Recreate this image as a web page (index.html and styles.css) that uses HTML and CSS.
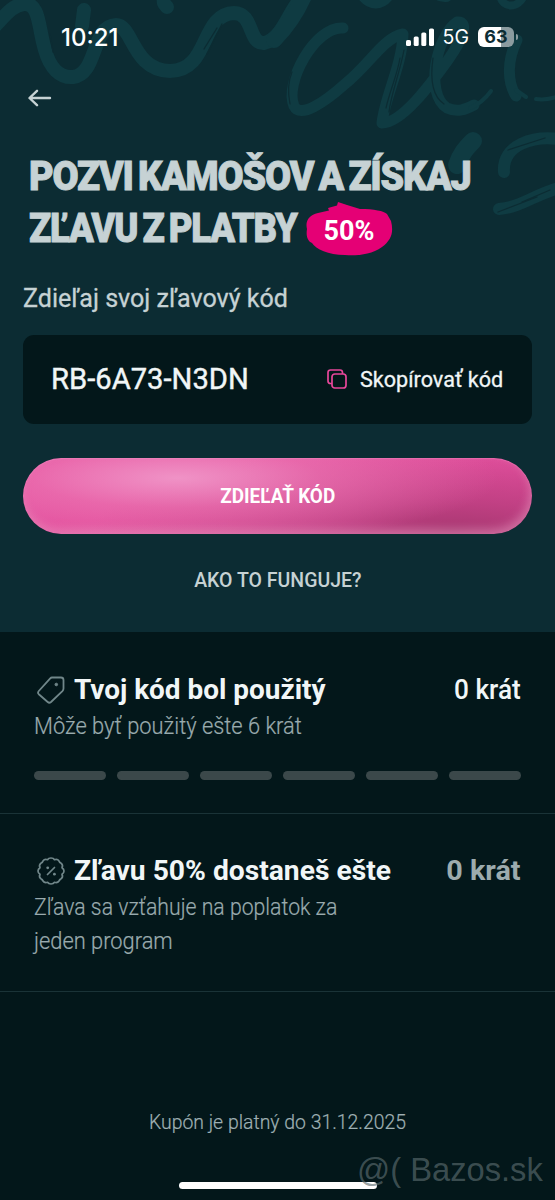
FILE: index.html
```html
<!DOCTYPE html>
<html lang="sk">
<head>
<meta charset="utf-8">
<title>Pozvi kamošov</title>
<link rel="stylesheet" href="styles.css">
</head>
<body>
<main class="screen">
  <section class="hero">
    <svg class="scribble" viewBox="0 0 555 240" fill="none" stroke-linecap="round" stroke-linejoin="round">
      <g stroke-width="14">
        <path d="M-8 29C4 17 12 5 24 4C40 3 38 27 45 50C50 68 60 78 73 77C98 74 91 26 116 25C133 25 132 70 170 71C210 71 200 14 234 13C254 13 248 44 264 43C286 38 289 2 310-8"/>
        <path d="M84 10L82 26M164-4C163 3 164 4 167 7M365-4C371 3 380 4 387-5M440-6L446-5"/>
        <path d="M500-5C502 9 519 9 524-5" stroke-width="8"/>
      </g>
      <path d="M274 40C286 28 296 14 304-4" stroke-width="16"/>
      <path d="M343 28C315 26 284 83 294 106C300 119 325 102 345 84C370 64 383 38 403 34C402 66 385 96 382 123C402 123 430 85 448 60C464 37 469 21 457 22C437 35 424 93 447 108C458 113 466 109 474 105" stroke-width="11"/>
      <path d="M470 108C480 104 486 98 491 91" stroke-width="4"/>
      <path d="M404 50C400 72 391 94 389 112M400 58C397 76 390 90 386 108M433 58C430 79 432 96 444 104M292 72C287 84 288 94 290 104" class="bristle" stroke-width="1.2"/>
      <path d="M517 40C507 60 507 82 516 96" stroke-width="11"/>
      <path d="M516 90L526 97M536 99Q550 101 566 93" stroke-width="4"/>
      <path d="M473 141C465 149 461 154 457 165" stroke-width="18"/>
      <path d="M565 140C533 134 502 145 504 172" stroke-width="12"/>
      <path d="M499 209C522 207 535 194 562 187" stroke-width="12"/>
      <path d="M508 150L545 138M498 212L537 197M522 202L550 190M53 52L50 34M204 49L217 28M207 54L222 24" class="bristle" stroke-width="1.3"/>
    </svg>
    <header class="status">
      <span class="time">10:21</span>
      <span class="indicators">
        <svg width="28" height="19" viewBox="0 0 28 19" fill="#fff"><rect y="12" width="5" height="6" rx="1.6"/><rect x="7.7" y="8.4" width="5" height="9.6" rx="1.6"/><rect x="15.3" y="4.5" width="5" height="13.5" rx="1.6"/><rect x="23" y=".5" width="5" height="17.5" rx="1.6"/></svg>
        <span class="network">5G</span>
        <span class="battery">63</span>
      </span>
    </header>
    <svg class="back" width="24" height="18" viewBox="0 0 24 18" fill="none" stroke="#c6d2d4" stroke-width="2.4" stroke-linecap="round" stroke-linejoin="round"><path d="M22 9H2M9 1.8L1.5 9L9 16.2"/></svg>
    <h1 class="title">
      <span class="line"><span class="fit t1">POZVI KAMOŠOV A ZÍSKAJ</span></span>
      <span class="line"><span class="fit t2">ZĽAVU Z PLATBY</span></span>
      <span class="discount">
        <svg viewBox="0 0 88 56"><path d="M1 28C-1 20 3 14 12 12L23 9.5L22 7L31 4.5L32 1L41 4L54 8C68 8 78 10 81 13L85 20C88 32 85 39 76 46C65 54 50 55 39 54C22 54 10 48 6 42C1 40 0 34 1 28Z" fill="#e50075"/></svg>
        <span>50%</span>
      </span>
    </h1>
    <p class="subtitle"><span class="fit sub">Zdieľaj svoj zľavový kód</span></p>
    <div class="codebox">
      <span class="code">RB-6A73-N3DN</span>
      <svg class="copyicon" width="20" height="20" viewBox="0 0 20 20" fill="none" stroke="#e8479b" stroke-width="1.7"><path d="M5 14.5H3.5Q1 14.5 1 12V3.5Q1 1 3.5 1H13Q15.5 1 15.5 3.5V5"/><rect x="5" y="5" width="14" height="14" rx="2.8"/></svg>
      <span class="copy"><span class="fit c2">Skopírovať kód</span></span>
    </div>
    <div class="share"><span class="fit b1">ZDIEĽAŤ KÓD</span></div>
    <div class="how"><span class="fit b2">AKO TO FUNGUJE?</span></div>
  </section>
  <section class="row used">
    <div class="head">
      <svg width="28" height="28" viewBox="0 0 28 28" fill="none" stroke="#71878a" stroke-width="1.8" stroke-linejoin="round"><path d="M15 1.5H24Q26.5 1.5 26.5 4V12.5Q26.5 14 25.4 15.1L14 26Q12.3 27.5 10.7 26L1.8 18.2Q.3 16.7 1.8 15L13 2.6Q14 1.5 15 1.5Z"/><circle cx="19.3" cy="8.5" r="1.3" fill="#71878a" stroke-width="1"/></svg>
      <h2><span class="fit h1a">Tvoj kód bol použitý</span></h2>
      <span class="count"><span class="fit n1">0 krát</span></span>
    </div>
    <p><span class="fit p1">Môže byť použitý ešte 6 krát</span></p>
    <div class="bars"><i></i><i></i><i></i><i></i><i></i><i></i></div>
  </section>
  <section class="row left">
    <div class="head">
      <svg width="28" height="28" viewBox="0 0 28 28" fill="none" stroke="#71878a" stroke-width="1.7" stroke-linecap="round" stroke-linejoin="round"><path d="M14 1Q16.5 1 17.5 2.7Q20.5 1.7 22.2 4.2Q22.5 5.5 23.7 5.9Q26.5 8 25 10.7Q27 12 27 14Q27 16 25 17.3Q26.5 20 23.7 22.1Q22.5 22.5 22.2 23.8Q20.5 26.3 17.5 25.3Q16.5 27 14 27Q11.5 27 10.5 25.3Q7.5 26.3 5.8 23.8Q5.5 22.5 4.3 22.1Q1.5 20 3 17.3Q1 16 1 14Q1 12 3 10.7Q1.5 8 4.3 5.9Q5.5 5.5 5.8 4.2Q7.5 1.7 10.5 2.7Q11.5 1 14 1Z"/><path d="M17.5 10.5L10.5 17.5"/><g fill="#71878a" stroke="none"><circle cx="10.7" cy="10.8" r="1.4"/><circle cx="17.4" cy="17.2" r="1.4"/></g></svg>
      <h2><span class="fit h2a">Zľavu 50% dostaneš ešte</span></h2>
      <span class="count muted"><span class="fit n2">0 krát</span></span>
    </div>
    <p><span class="fit p2">Zľava sa vzťahuje na poplatok za</span><br><span class="fit p3">jeden program</span></p>
  </section>
  <footer class="footer">
    <p class="valid"><span class="fit f1">Kupón je platný do 31.12.2025</span></p>
    <div class="home"></div>
    <span class="watermark">@( Bazos.sk</span>
  </footer>
</main>
</body>
</html>
```
FILE: styles.css
```css
* { box-sizing: border-box; }
body { margin: 0; background: #03171a; font-family: Roboto, "Liberation Sans", sans-serif; }
.screen { width: 555px; height: 1200px; overflow: hidden; position: relative; }
h1, h2, p { margin: 0; }
.fit { display: inline-block; white-space: nowrap; transform-origin: left center; }
.t1, .t2 { letter-spacing: -1.3px; word-spacing: -3px; -webkit-text-stroke: .9px #c6d2d4; }
.t1 { transform: scaleX(.946); }
.t2 { transform: scaleX(.912); }
.sub { transform: scaleX(.965); -webkit-text-stroke: .3px; }
.c2 { transform: scaleX(.96); }
.b1 { transform: scaleX(.945); }
.b2 { transform: scaleX(.975); }
.h1a { transform: scaleX(.98); }
.h2a { transform: scaleX(.99); }
.n1 { transform: scaleX(.97); }
.n2 { transform: scaleX(1.01); }
.p1 { transform: scaleX(.95); }
.p2 { transform: scaleX(.923); }
.p3 { transform: scaleX(.95); }
.f1 { transform: scaleX(.97); }
.hero { height: 632px; background: #0c2c33; position: relative; padding: 0 23px; }
.scribble { position: absolute; left: 0; top: 0; width: 555px; height: 240px; stroke: #0f3b42; }
.bristle { stroke: #0c2c33; }
.hero > :not(.scribble) { position: relative; }
.status { height: 74px; display: flex; align-items: center; justify-content: space-between; color: #fff; font-family: Inter, sans-serif; padding: 0 15px 0 38px; }
.time { font-size: 24px; font-weight: 550; letter-spacing: 0; }
.indicators { display: flex; align-items: center; }
.network { font-size: 19.5px; margin: 0 9px; }
.battery { width: 36px; height: 20px; border-radius: 6px; margin-right: 3px; background: linear-gradient(90deg, #fff 63%, #8b9b9f 63%); color: #0c2c33; font-size: 18px; font-weight: 700; line-height: 20px; text-align: center; position: relative; }
.battery::after { content: ""; position: absolute; right: -4px; top: 7px; width: 2px; height: 6px; border-radius: 0 2px 2px 0; background: #8b9b9f; }
.back { display: block; margin: 15px 0 0 5px; }
.title { height: 170px; padding: 44px 0 0 6px; color: #c6d2d4; font-size: 40px; font-weight: 900; line-height: 52px; }
.line { display: block; height: 52px; }
.discount { position: absolute; left: 283px; top: 94px; width: 88px; height: 56px; display: flex; justify-content: center; align-items: center; color: #fff; font-size: 27px; font-weight: 700; line-height: 56px; }
.discount svg { position: absolute; inset: 0; }
.discount span { position: relative; top: 2px; left: -1px; }
.subtitle { height: 58px; padding-top: 6px; font-size: 26px; line-height: 30px; color: #c6d2d4; }
.codebox { height: 89px; border-radius: 11px; background: #03171a; display: flex; align-items: center; padding: 0 0 2px 28px; color: #f1f6f7; }
.code { width: 276px; font-size: 29.2px; -webkit-text-stroke: .4px; }
.copyicon { flex: none; }
.copy { margin-left: 13px; font-size: 22.5px; -webkit-text-stroke: .3px; }
.share { height: 76px; margin-top: 34px; border-radius: 38px; display: flex; align-items: center; justify-content: center; color: #fff; font-size: 20px; font-weight: 700;
  background: radial-gradient(ellipse 320px 66px at 155px 20px, rgba(240,150,200,.95) 0%, rgba(236,120,180,.6) 45%, rgba(232,90,162,0) 100%), radial-gradient(ellipse 360px 85px at 430px 72px, #a93872 0%, rgba(182,60,124,.75) 35%, rgba(200,65,135,0) 100%), linear-gradient(#e752a1, #e24c9b);
  box-shadow: inset -2px -5px 10px rgba(235,165,200,.45), inset 0 1px 1px rgba(245,150,200,.35); }
.how { height: 92px; text-align: center; line-height: 92px; font-size: 20px; font-weight: 500; color: #c6d2d4; }
.row { padding: 0 34px; border-bottom: 1px solid #1a3337; }
.used { height: 182px; padding-top: 38px; }
.left { height: 178px; padding-top: 37px; }
.head { display: flex; align-items: center; height: 40px; padding-left: 3px; color: #f1f6f7; }
.head svg { flex: none; }
h2 { flex: 1; margin-left: 9px; font-size: 28.5px; font-weight: 700; line-height: 40px; }
.count { font-size: 27px; font-weight: 500; line-height: 42px; }
.count .fit { transform-origin: right center; }
.muted { color: #9cabae; font-size: 28.5px; font-weight: 700; }
.row p { font-size: 23px; font-weight: 300; line-height: 34px; color: #9aabae; -webkit-text-stroke: .2px; }
.bars { display: flex; gap: 11px; margin-top: 27px; }
.bars i { flex: 1; height: 9px; border-radius: 5px; background: #3b484a; }
.footer { height: 208px; position: relative; padding-top: 117px; }
.valid { text-align: center; font-size: 20px; font-weight: 300; line-height: 26px; color: #9fb0b3; -webkit-text-stroke: .2px; }
.valid .fit, .share .fit, .how .fit { transform-origin: center; }
.home { width: 198px; height: 7px; border-radius: 4px; background: #fff; margin: 47px auto 0; }
.watermark { position: absolute; left: 357px; top: 160px; font: 32.7px/36px "Liberation Sans", sans-serif; color: rgba(92,108,111,.65); white-space: nowrap; }
```
